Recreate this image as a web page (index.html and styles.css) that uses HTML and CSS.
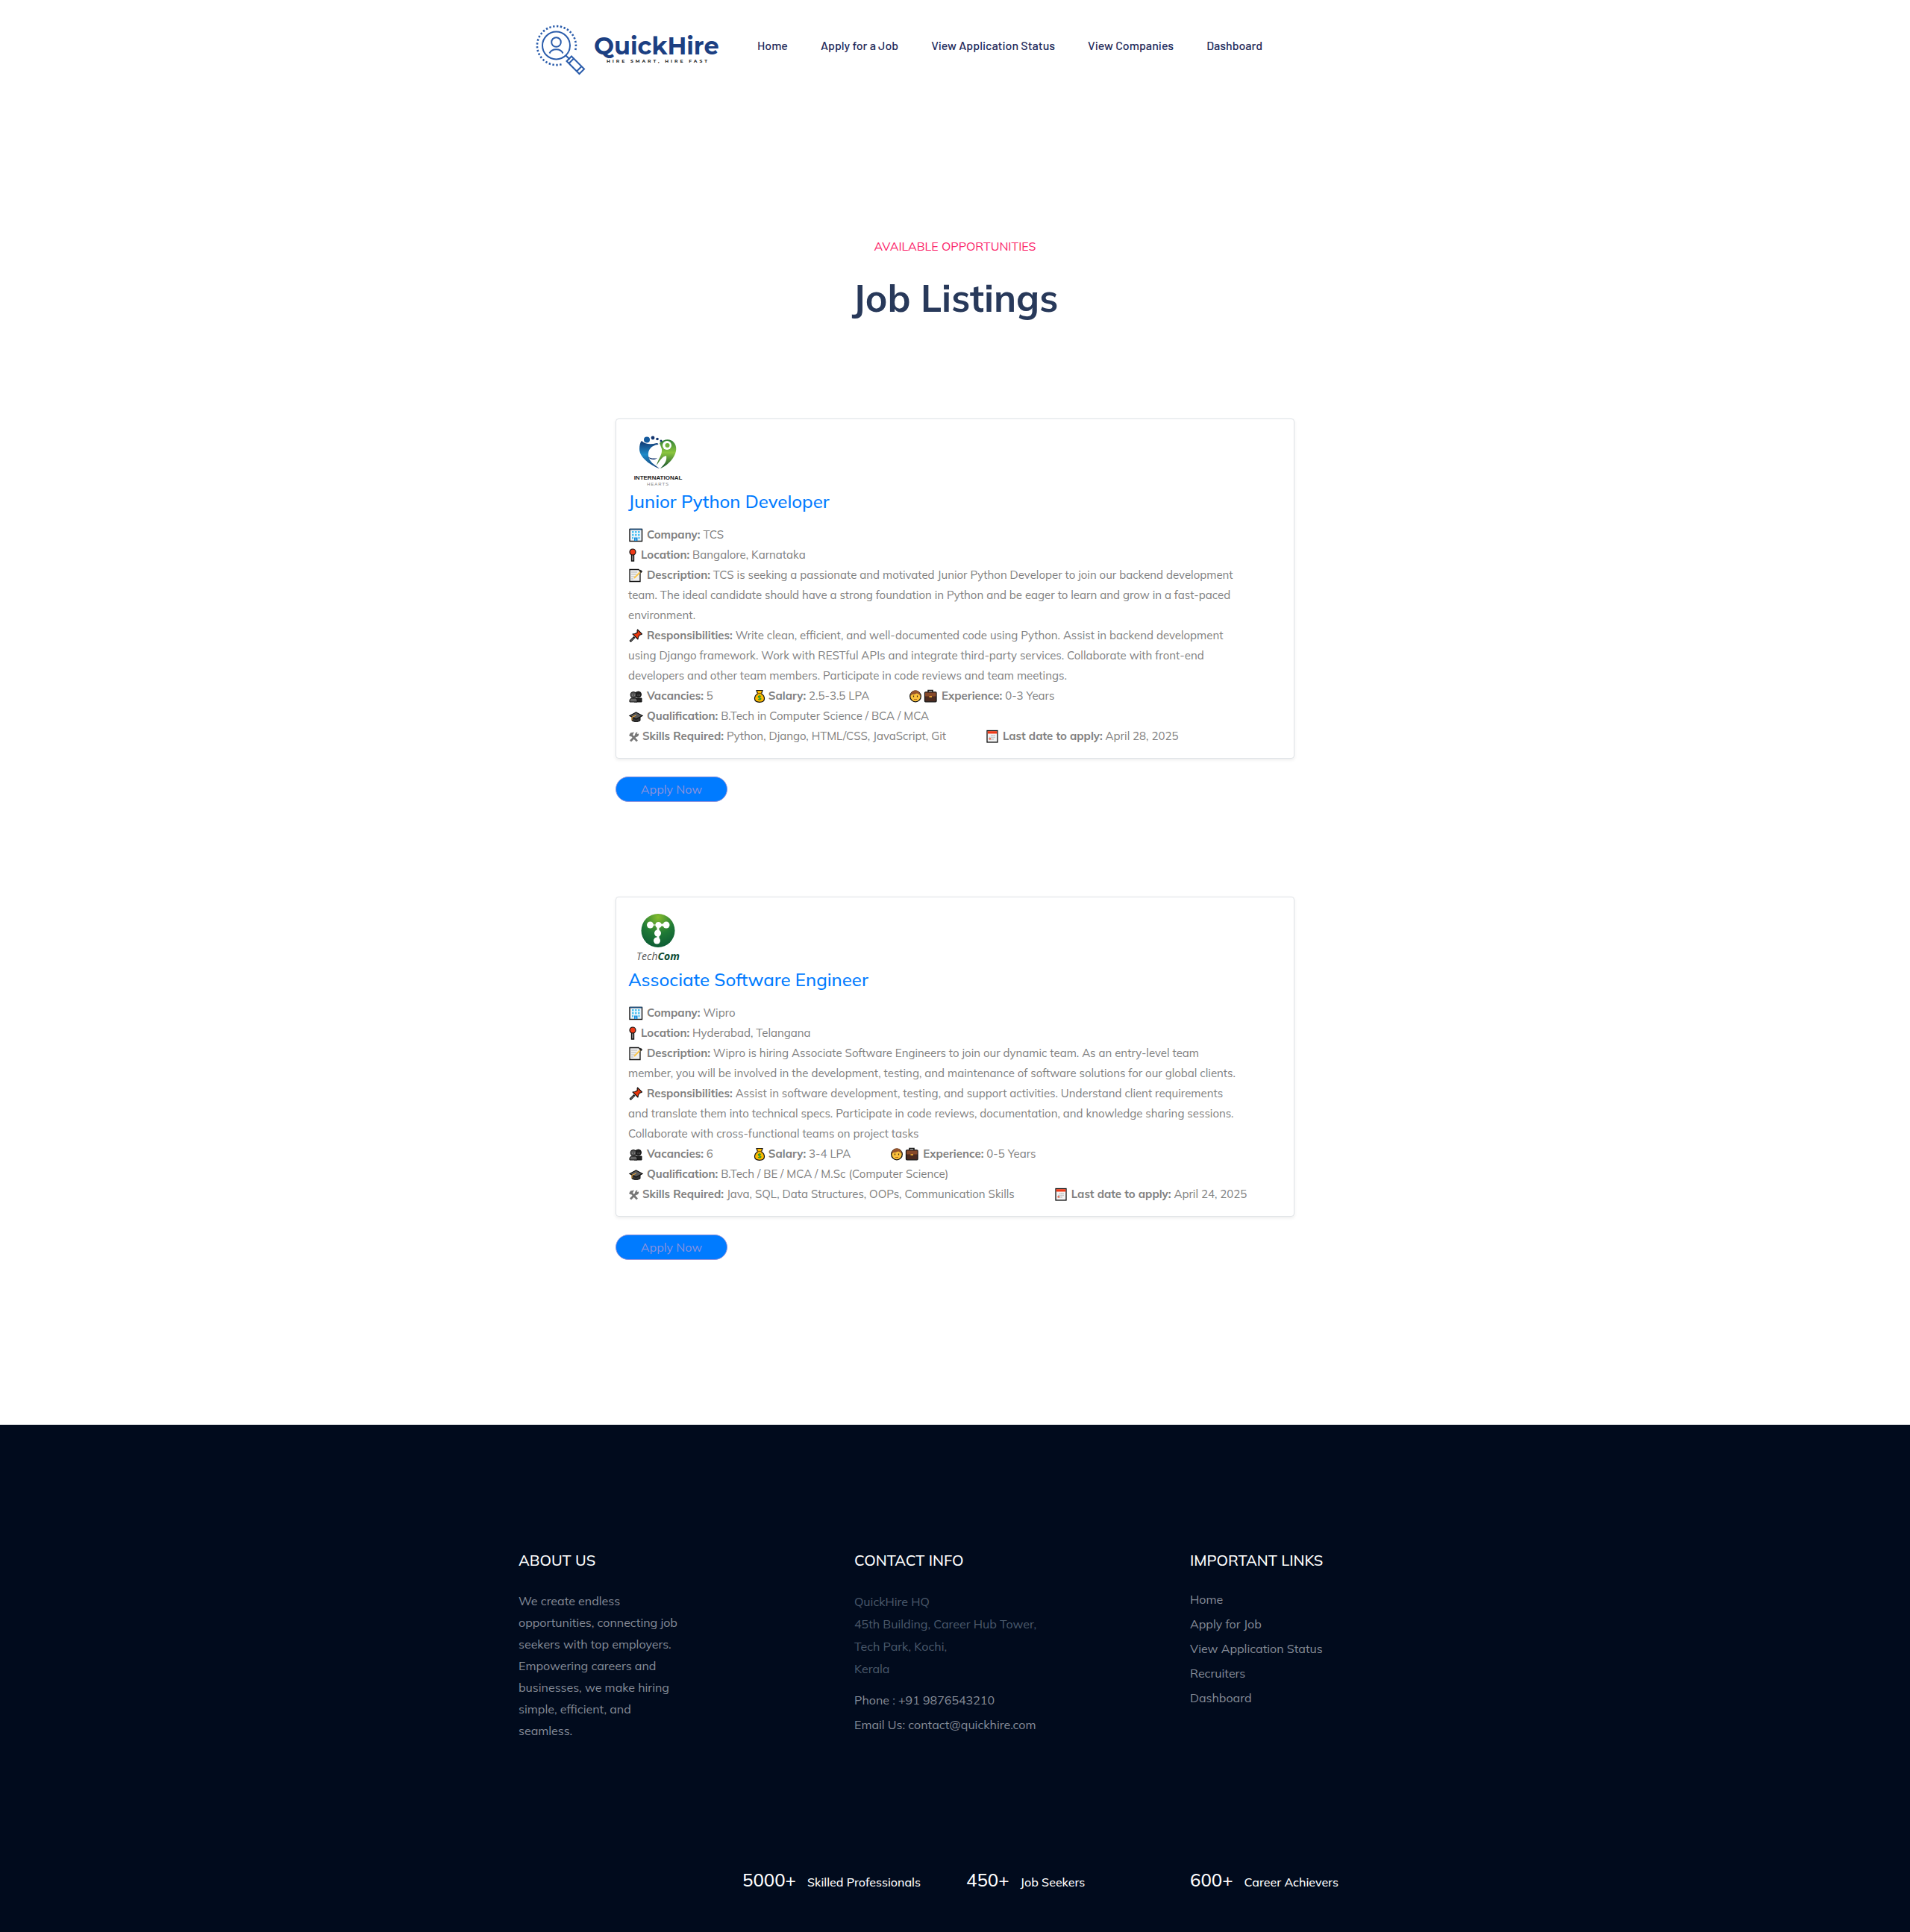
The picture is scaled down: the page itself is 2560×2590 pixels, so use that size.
FILE: index.html
```html
<!DOCTYPE html>
<html lang="en">
<head>
<meta charset="utf-8">
<meta name="viewport" content="width=device-width, initial-scale=1">
<title>QuickHire - Job Listings</title>
<link rel="stylesheet" href="styles.css">
</head>
<body>

<!-- Shared icon symbols -->
<svg class="sprite" aria-hidden="true">
  <symbol id="i-building" viewBox="0 0 21 20">
    <rect x="2" y="2.5" width="16.5" height="16" fill="#eef6fc" stroke="#111" stroke-width="1.4"/>
    <path d="M2 2.5h16.5" stroke="#1d4e7c" stroke-width="1.6"/>
    <g fill="#4cc2f1"><path d="M5 5h2.500v2.500H5zM9 5h2.500v2.500H9zM13 5h2.500v2.500H13zM5 9h2.500v2.500H5zM9 9h2.500v2.500H9zM13 9h2.500v2.500H13zM5 13h2v2.500H5zM13.500 13h2v2.500h-2z"/></g>
    <path d="M8 13.500h4.500v4.500H8z" fill="#1488d8"/><path d="M10 14.500v3.500" stroke="#8fd8fa"/>
  </symbol>
  <symbol id="i-pin" viewBox="0 0 13 20">
    <path d="M4.500 9h3v9h-3z" fill="#999" stroke="#111" stroke-width="1.400"/>
    <circle cx="6" cy="6" r="4" fill="#f03a17" stroke="#111" stroke-width="1.200"/>
  </symbol>
  <symbol id="i-memo" viewBox="0 0 21 20">
    <path d="M2 2.500h12l2 2v14H2z" fill="#f0f0f0" stroke="#111" stroke-width="1.300"/>
    <path d="M4 6h8M4 9h7M4 12h5M4 15h3" stroke="#b5b5b5" stroke-width="1.200"/>
    <path d="M8 14l8-8" stroke="#fbc64d" stroke-width="2"/>
    <path d="M15.500 5l2-1.500M16.500 6.500l2-2" stroke="#222" stroke-width="1.800"/>
  </symbol>
  <symbol id="i-pushpin" viewBox="0 0 21 20">
    <path d="M2.500 18l6-6" stroke="#111" stroke-width="3"/><path d="M3.500 17l4-4" stroke="#aaa"/>
    <path d="M12.500 2l6 6-2 1-1 0-2 3-.5 3-7-7 3.500-.5 3-2-.5-1.500z" fill="#e8380d" stroke="#111" stroke-width="1.100" stroke-linejoin="round"/>
  </symbol>
  <symbol id="i-people" viewBox="0 0 21 20">
    <path d="M8 18v-5h10v5z" fill="#222" stroke="#111"/><circle cx="13.500" cy="8" r="4" fill="#222" stroke="#111"/>
    <path d="M2 18v-3l2-2h6l2 2v3z" fill="#666" stroke="#111"/><circle cx="7" cy="8.500" r="4" fill="#555" stroke="#111"/>
    <path d="M5.500 8.500v1M8.500 8.500v1M13 8.500v1M15.500 8.500v1" stroke="#ccc" stroke-width=".7"/>
  </symbol>
  <symbol id="i-money" viewBox="0 0 17 20">
    <path d="M5 2.500h8l-1.500 4.500c2.500 1.500 4 4 4 6.500 0 3-2 4.800-6.500 4.800S2.500 16.500 2.500 13.500c0-2.500 1.500-5 4-6.500z" fill="#fdb900" stroke="#111" stroke-width="1.200"/>
    <path d="M6 6.500h6" stroke="#8a5a00"/>
    <path d="M11 10.500c-1-.8-3.800-.8-3.800.8 0 1.500 3.800.9 3.800 2.500 0 1.500-3 1.500-4 .6M9 8.800v7" fill="none" stroke="#24962b" stroke-width="1.100"/>
  </symbol>
  <symbol id="i-worker" viewBox="0 0 40 20">
    <circle cx="9" cy="10.500" r="7.300" fill="#fcc23c" stroke="#111" stroke-width="1.300"/>
    <path d="M2.500 10c0-5 3-7.500 6.500-7.500s6.500 2.500 6.500 7.500l-1.500-2-3-1.500-4 1.500-2.500 0z" fill="#99562d"/>
    <path d="M6.500 9.500v2M11.500 9.500v2" stroke="#3b2412" stroke-width="1.200"/><path d="M7 14.500h4" stroke="#b36b1c"/>
    <path d="M26 5V2.500h6V5" fill="none" stroke="#111" stroke-width="1.500"/>
    <rect x="21.500" y="4.800" width="15.500" height="13" rx="1" fill="#4b2b20" stroke="#111" stroke-width="1.300"/>
    <path d="M22 5.500h14.500v5H22z" fill="#86492a"/><path d="M27.500 11h3.500" stroke="#f5b335" stroke-width="1.600"/>
  </symbol>
  <symbol id="i-cap" viewBox="0 0 21 20">
    <path d="M5 10v6c3 2 8 2 11 0v-6z" fill="#333" stroke="#111"/>
    <path d="M2 9.500L10.500 5 19 9.500 10.500 14z" fill="#5a5a5a" stroke="#111" stroke-width="1.200"/>
    <path d="M10.500 9L5 11.500v4" fill="none" stroke="#e8a33a" stroke-width="1.100"/>
  </symbol>
  <symbol id="i-tools" viewBox="0 0 15 20">
    <path d="M3.500 7.500l8.500 9" stroke="#777" stroke-width="2.600"/>
    <path d="M1 9l2-3.500 5-1-2 3.500-2.500 2.500z" fill="#777"/>
    <path d="M11 8.500L3 16.500" stroke="#777" stroke-width="2.800"/>
    <path d="M14 6.500c.8 3-2 5-4.500 4-1.200-3 .3-6 3-6l-1 2.500z" fill="#777"/>
  </symbol>
  <symbol id="i-calendar" viewBox="0 0 19 20">
    <rect x="2" y="2.500" width="14" height="15.500" fill="#f3f3f3" stroke="#111" stroke-width="1.300"/>
    <path d="M2.700 3.200h12.600v3.300H2.700z" fill="#f03a17"/>
    <path d="M7 9h6M5 11.500h8M5 14h6" stroke="#b9b9b9" stroke-width="1.500" stroke-dasharray="1.500 .6"/>
    <path d="M4.500 13.500h2.500" stroke="#f03a17" stroke-width="1.600"/>
  </symbol>
</svg>

<header class="header">
  <div class="container header-inner">
    <a class="brand" href="#" aria-label="QuickHire">
      <svg width="264" height="90" viewBox="0 0 264 90">
        <g fill="none" stroke="#2a5cab" stroke-width="2">
          <path d="M42.500 65.300A26 26 0 1 1 61 47" stroke-width="2.600" stroke-dasharray="2.400 2.500"/>
          <circle cx="35.500" cy="40" r="18.500"/>
          <circle cx="35.500" cy="35.500" r="6.300"/>
          <path d="M26.500 50.500c3-7 15-7 18 0"/>
          <path d="M48.500 53.500l5 5"/>
          <path d="M56 54.500l17 17-6.500 6.500-17-17zM59 57.500l-6.500 6.500M69.500 68l-6.500 6.500"/>
        </g>
        <text class="brand-name" x="86" y="52">QuickHire</text>
        <text class="brand-tag" x="103" y="63">HIRE SMART, HIRE FAST</text>
      </svg>
    </a>
    <nav class="nav" aria-label="Main">
      <a href="#">Home</a>
      <a href="#">Apply for a Job</a>
      <a href="#">View Application Status</a>
      <a href="#">View Companies</a>
      <a href="#">Dashboard</a>
    </nav>
  </div>
</header>

<main class="listings">
  <div class="section-title">
    <span>Available Opportunities</span>
    <h1>Job Listings</h1>
  </div>

  <article class="job">
    <div class="card">
      <svg class="company-logo" width="80" height="80" viewBox="0 0 80 80" role="img" aria-label="International Hearts">
        <defs>
          <linearGradient id="blue" x1="0" y1="0" x2="0" y2="1"><stop offset="0" stop-color="#12356f"/><stop offset=".5" stop-color="#1f8bc9"/><stop offset="1" stop-color="#123c74"/></linearGradient>
          <linearGradient id="green" x1="0" y1="0" x2="0" y2="1"><stop offset="0" stop-color="#2f7f36"/><stop offset=".45" stop-color="#8cc63e"/><stop offset="1" stop-color="#12502d"/></linearGradient>
        </defs>
        <path d="M18 13c5 5 13 5 20 3 2 0 3 1 2 2-9 1-14 7-13 15 1 8 8 12 15 17-5-1-27-12-27-26 0-5 1-9 3-11z" fill="url(#blue)"/>
        <path d="M26 34c4 3 9 3 13 2-3 3-10 3-13-2z" fill="#12356f"/>
        <path d="M42 16c6-6 15-6 19-1 5 5 4 14-1 21-4 6-11 12-17 14 7-7 9-11 8-17-5 1-8 5-13 13 2-9 8-14 7-22z" fill="url(#green)"/>
        <circle cx="52" cy="19" r="6" fill="#fff"/><circle cx="52.500" cy="19" r="3" fill="#6fb23c"/>
        <circle cx="25" cy="11.500" r="4" fill="#155b9e"/>
        <g fill="#12356f"><circle cx="33" cy="9" r="2.400"/><circle cx="39" cy="10.500" r="1.800"/><circle cx="44" cy="13" r="1.500"/></g>
        <text class="hearts-name" x="40" y="65" text-anchor="middle">INTERNATIONAL</text>
        <text class="hearts-sub" x="40" y="73" text-anchor="middle">HEARTS</text>
      </svg>
      <h2><a href="#">Junior Python Developer</a></h2>
      <div class="details">
        <p><svg class="icon w21"><use href="#i-building"/></svg> <strong>Company:</strong> TCS</p>
        <p><svg class="icon w13"><use href="#i-pin"/></svg> <strong>Location:</strong> Bangalore, Karnataka</p>
        <p><svg class="icon w21"><use href="#i-memo"/></svg> <strong>Description:</strong> TCS is seeking a passionate and motivated Junior Python Developer to join our backend development team. The ideal candidate should have a strong foundation in Python and be eager to learn and grow in a fast-paced environment.</p>
        <p><svg class="icon w21"><use href="#i-pushpin"/></svg> <strong>Responsibilities:</strong> Write clean, efficient, and well-documented code using Python. Assist in backend development using Django framework. Work with RESTful APIs and integrate third-party services. Collaborate with front-end developers and other team members. Participate in code reviews and team meetings.</p>
        <div class="facts">
          <p><svg class="icon w21"><use href="#i-people"/></svg> <strong>Vacancies:</strong> 5</p>
          <p><svg class="icon w17"><use href="#i-money"/></svg> <strong>Salary:</strong> 2.5-3.5 LPA</p>
          <p><svg class="icon w40"><use href="#i-worker"/></svg> <strong>Experience:</strong> 0-3 Years</p>
        </div>
        <p><svg class="icon w21"><use href="#i-cap"/></svg> <strong>Qualification:</strong> B.Tech in Computer Science / BCA / MCA</p>
        <div class="facts">
          <p><svg class="icon w15"><use href="#i-tools"/></svg> <strong>Skills Required:</strong> Python, Django, HTML/CSS, JavaScript, Git</p>
          <p><svg class="icon w19"><use href="#i-calendar"/></svg> <strong>Last date to apply:</strong> April 28, 2025</p>
        </div>
      </div>
    </div>
    <button class="apply" type="button">Apply Now</button>
  </article>

  <article class="job">
    <div class="card">
      <svg class="company-logo" width="80" height="80" viewBox="0 0 80 80" role="img" aria-label="TechCom">
        <defs>
          <radialGradient id="ball" cx=".5" cy=".1" r=".9"><stop offset="0" stop-color="#85bd2d"/><stop offset=".55" stop-color="#1f7a36"/><stop offset="1" stop-color="#0d5c35"/></radialGradient>
        </defs>
        <circle cx="40" cy="28.500" r="22.500" fill="url(#ball)"/>
        <path d="M40 21h12M40 20v22" stroke="#fff" stroke-width="3"/>
        <path d="M30 21h7" stroke="#fff"/>
        <g fill="#fff"><circle cx="29.500" cy="21" r="4.500"/><circle cx="40.500" cy="21" r="4"/><circle cx="51" cy="21" r="4.500"/><circle cx="39.500" cy="32" r="4.500"/><circle cx="38.500" cy="42" r="4.500"/></g>
        <text class="techcom" x="40" y="68" text-anchor="middle">Tech<tspan class="techcom-bold">Com</tspan></text>
      </svg>
      <h2><a href="#">Associate Software Engineer</a></h2>
      <div class="details">
        <p><svg class="icon w21"><use href="#i-building"/></svg> <strong>Company:</strong> Wipro</p>
        <p><svg class="icon w13"><use href="#i-pin"/></svg> <strong>Location:</strong> Hyderabad, Telangana</p>
        <p><svg class="icon w21"><use href="#i-memo"/></svg> <strong>Description:</strong> Wipro is hiring Associate Software Engineers to join our dynamic team. As an entry-level team member, you will be involved in the development, testing, and maintenance of software solutions for our global clients.</p>
        <p><svg class="icon w21"><use href="#i-pushpin"/></svg> <strong>Responsibilities:</strong> Assist in software development, testing, and support activities. Understand client requirements and translate them into technical specs. Participate in code reviews, documentation, and knowledge sharing sessions. Collaborate with cross-functional teams on project tasks</p>
        <div class="facts">
          <p><svg class="icon w21"><use href="#i-people"/></svg> <strong>Vacancies:</strong> 6</p>
          <p><svg class="icon w17"><use href="#i-money"/></svg> <strong>Salary:</strong> 3-4 LPA</p>
          <p><svg class="icon w40"><use href="#i-worker"/></svg> <strong>Experience:</strong> 0-5 Years</p>
        </div>
        <p><svg class="icon w21"><use href="#i-cap"/></svg> <strong>Qualification:</strong> B.Tech / BE / MCA / M.Sc (Computer Science)</p>
        <div class="facts">
          <p><svg class="icon w15"><use href="#i-tools"/></svg> <strong>Skills Required:</strong> Java, SQL, Data Structures, OOPs, Communication Skills</p>
          <p><svg class="icon w19"><use href="#i-calendar"/></svg> <strong>Last date to apply:</strong> April 24, 2025</p>
        </div>
      </div>
    </div>
    <button class="apply" type="button">Apply Now</button>
  </article>
</main>

<footer class="footer">
  <div class="container">
    <div class="footer-columns">
      <section class="footer-col">
        <h3>About Us</h3>
        <p class="about">We create endless opportunities, connecting job seekers with top employers. Empowering careers and businesses, we make hiring simple, efficient, and seamless.</p>
      </section>
      <section class="footer-col">
        <h3>Contact Info</h3>
        <address>QuickHire HQ<br>45th Building, Career Hub Tower,<br>Tech Park, Kochi,<br>Kerala</address>
        <ul>
          <li><a href="#">Phone : +91 9876543210</a></li>
          <li><a href="#">Email Us: contact@quickhire.com</a></li>
        </ul>
      </section>
      <section class="footer-col">
        <h3>Important Links</h3>
        <ul>
          <li><a href="#">Home</a></li>
          <li><a href="#">Apply for Job</a></li>
          <li><a href="#">View Application Status</a></li>
          <li><a href="#">Recruiters</a></li>
          <li><a href="#">Dashboard</a></li>
        </ul>
      </section>
    </div>
    <div class="stats">
      <p><span class="count">5000+</span><span>Skilled Professionals</span></p>
      <p><span class="count">450+</span><span>Job Seekers</span></p>
      <p><span class="count">600+</span><span>Career Achievers</span></p>
    </div>
  </div>
</footer>
</body>
</html>
```
FILE: styles.css
```css
*, *::before, *::after { box-sizing: border-box; }
body {
  margin: 0;
  background: #fff;
  color: #808080;
  font-family: Mulish, Nunito, "Open Sans", sans-serif;
  font-size: 16px;
}
h1, h2, h3, p, ul, address { margin: 0; padding: 0; }
ul { list-style: none; }
a { color: inherit; text-decoration: none; }
address { font-style: normal; }
.sprite { display: none; }

.container { max-width: 1200px; margin: 0 auto; padding: 0 15px; }

/* Header */
.header-inner {
  display: flex;
  align-items: flex-start;
  gap: 41px;
  padding-top: 21px;
}
.brand { display: block; margin-left: 15px; }
.brand svg { display: block; }
.brand-name { font: 700 32px Montserrat, Inter, sans-serif; fill: #1c3f82; }
.brand-tag { font: 700 6px Montserrat, Inter, sans-serif; letter-spacing: 3px; fill: #222; }
.nav {
  display: flex;
  gap: 44px;
  padding-top: 28px;
  font: 500 16px/24px Barlow, Roboto, sans-serif;
  color: #1f2b5b;
}

/* Listings */
.listings {
  max-width: 940px;
  margin: 0 auto;
  padding: 206px 15px 94px;
}
.section-title { text-align: center; margin-bottom: 131px; }
.section-title span {
  display: block;
  color: #fb246a;
  line-height: 27px;
  text-transform: uppercase;
}
.section-title h1 {
  margin-top: 26px;
  color: #28395a;
  font-size: 50px;
  line-height: 60px;
  font-weight: 700;
}
.job { margin-bottom: 127px; }
.card {
  padding: 16px;
  border: 1px solid #dee2e6;
  border-radius: 4px;
  box-shadow: 0 2px 4px rgba(0, 0, 0, .075);
}
.company-logo { display: block; }
.hearts-name { font: 700 8px "Liberation Sans", sans-serif; fill: #222; }
.hearts-sub { font: 400 6px "Liberation Sans", sans-serif; letter-spacing: 1px; fill: #888; }
.techcom { font: italic 400 14px "Open Sans", sans-serif; fill: #555; }
.techcom-bold { font-weight: 700; fill: #0d4a30; }
.card h2 {
  margin-bottom: 16px;
  color: #007bff;
  font-size: 24px;
  line-height: 29px;
  font-weight: 500;
}
.details { max-width: 820px; font-size: 15px; line-height: 27px; }
.details strong { font-weight: 700; }
.facts { display: flex; gap: 53px; white-space: nowrap; }
.icon { height: 20px; vertical-align: -5px; }
.w13 { width: 13px; }
.w15 { width: 15px; }
.w17 { width: 17px; }
.w19 { width: 19px; }
.w21 { width: 21px; }
.w40 { width: 40px; }
.apply {
  display: block;
  width: 150px;
  height: 34px;
  margin-top: 24px;
  padding: 0;
  border: 1px solid #8b92dd;
  border-radius: 17px;
  background: #007bff;
  color: #8b92dd;
  font: inherit;
}

/* Footer */
.footer { padding: 167px 0 51px; background: #010b1d; color: #868c98; }
.footer-columns { display: flex; justify-content: space-between; margin: 0 -15px; }
.footer-col { width: 300px; padding: 0 15px; }
.footer h3 {
  margin-bottom: 21px;
  color: #fff;
  font-size: 20px;
  line-height: 30px;
  font-weight: 500;
  text-transform: uppercase;
}
.about { max-width: 220px; padding-top: 4px; line-height: 29px; }
.footer address { padding-top: 4px; margin-bottom: 11px; color: #4b5a6c; line-height: 30px; }
.footer li { line-height: 33px; }
.stats {
  display: grid;
  grid-template-columns: repeat(3, 300px);
  justify-content: end;
  margin: 167px -15px 0;
  color: #fff;
  font-weight: 500;
}
.stats p { display: flex; align-items: baseline; gap: 15px; padding: 0 15px; line-height: 36px; }
.count { font-size: 24px; }
```
